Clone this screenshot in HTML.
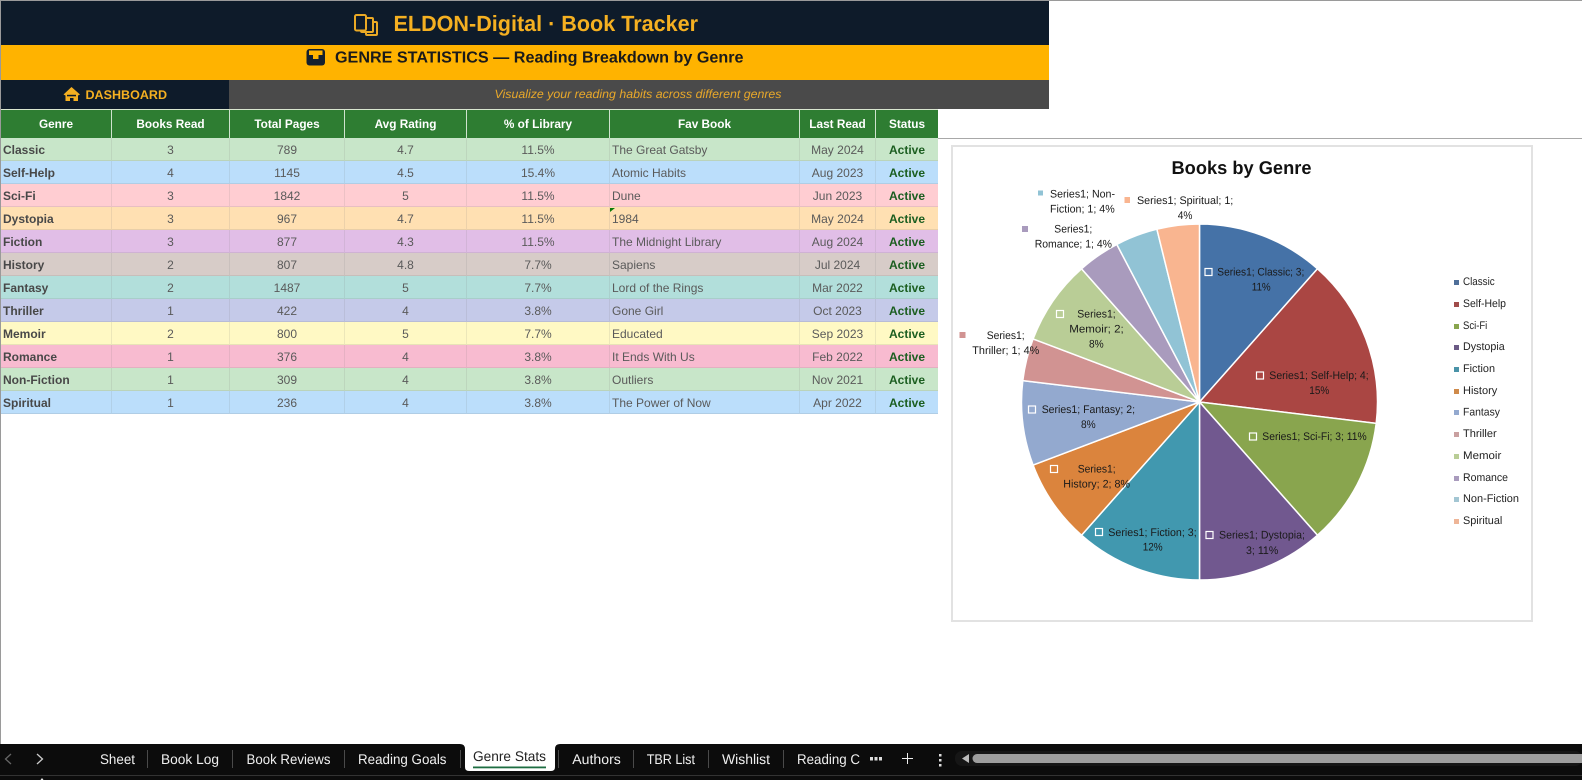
<!DOCTYPE html>
<html>
<head>
<meta charset="utf-8">
<title>Book Tracker</title>
<style>
html,body{margin:0;padding:0;background:#fff;}
body{position:relative;width:1582px;height:780px;overflow:hidden;font-family:"Liberation Sans",Arial,sans-serif;}
.b{position:absolute;}
table{position:absolute;left:1px;top:109px;border-collapse:separate;border-spacing:0;table-layout:fixed;width:937px;font-size:12px;color:#5a5a5a;}
th{height:29px;box-sizing:border-box;background:#2e7d32;color:#fff;font-weight:bold;text-align:center;padding:0;border-right:1px solid #cfe3cf;border-top:1px solid #d9e6cf;font-size:11.8px;}
th:last-child{border-right:0;}
td{height:23px;box-sizing:border-box;padding:2px 0 0;text-align:center;border-right:1px solid rgba(120,120,120,.14);border-bottom:1px solid rgba(120,120,120,.16);white-space:nowrap;overflow:hidden;}
td:first-child{text-align:left;padding-left:2px;font-weight:bold;color:#484848;}
td:nth-child(6){text-align:left;padding-left:2px;}
td:last-child{font-weight:bold;color:#1b5e20;border-right:0;}
svg{position:absolute;left:0;top:0;text-rendering:geometricPrecision;}
</style>
</head>
<body>
<div class="b" style="left:0;top:0;width:1582px;height:1px;background:#9a9a9a"></div>
<div class="b" style="left:0;top:0;width:1px;height:744px;background:#9a9a9a"></div>
<div class="b" style="left:1px;top:1px;width:1048px;height:44px;background:#0e1b2a"></div>
<div class="b" style="left:1px;top:45px;width:1048px;height:35px;background:#ffb300"></div>
<div class="b" style="left:1px;top:80px;width:228px;height:29px;background:#0e1b2a"></div>
<div class="b" style="left:229px;top:80px;width:820px;height:29px;background:#4a4a4a"></div>
<div class="b" style="left:938px;top:138px;width:644px;height:1px;background:#a8a8a8"></div>
<div class="b" style="left:951px;top:145px;width:578px;height:473px;border:2px solid #e2e2e2;background:#fff"></div>

<table>
<colgroup><col style="width:111px"><col style="width:118px"><col style="width:115px"><col style="width:122px"><col style="width:143px"><col style="width:190px"><col style="width:76px"><col style="width:62px"></colgroup>
<tr><th>Genre</th><th>Books Read</th><th>Total Pages</th><th>Avg Rating</th><th>% of Library</th><th>Fav Book</th><th>Last Read</th><th>Status</th></tr>
<tr style="background:#c8e6c9"><td>Classic</td><td>3</td><td>789</td><td>4.7</td><td>11.5%</td><td>The Great Gatsby</td><td>May 2024</td><td>Active</td></tr>
<tr style="background:#bbdefb"><td>Self-Help</td><td>4</td><td>1145</td><td>4.5</td><td>15.4%</td><td>Atomic Habits</td><td>Aug 2023</td><td>Active</td></tr>
<tr style="background:#ffcdd2"><td>Sci-Fi</td><td>3</td><td>1842</td><td>5</td><td>11.5%</td><td>Dune</td><td>Jun 2023</td><td>Active</td></tr>
<tr style="background:#ffe0b2"><td>Dystopia</td><td>3</td><td>967</td><td>4.7</td><td>11.5%</td><td>1984</td><td>May 2024</td><td>Active</td></tr>
<tr style="background:#e1bee7"><td>Fiction</td><td>3</td><td>877</td><td>4.3</td><td>11.5%</td><td>The Midnight Library</td><td>Aug 2024</td><td>Active</td></tr>
<tr style="background:#d7ccc8"><td>History</td><td>2</td><td>807</td><td>4.8</td><td>7.7%</td><td>Sapiens</td><td>Jul 2024</td><td>Active</td></tr>
<tr style="background:#b2dfdb"><td>Fantasy</td><td>2</td><td>1487</td><td>5</td><td>7.7%</td><td>Lord of the Rings</td><td>Mar 2022</td><td>Active</td></tr>
<tr style="background:#c5cae9"><td>Thriller</td><td>1</td><td>422</td><td>4</td><td>3.8%</td><td>Gone Girl</td><td>Oct 2023</td><td>Active</td></tr>
<tr style="background:#fff9c4"><td>Memoir</td><td>2</td><td>800</td><td>5</td><td>7.7%</td><td>Educated</td><td>Sep 2023</td><td>Active</td></tr>
<tr style="background:#f8bbd0"><td>Romance</td><td>1</td><td>376</td><td>4</td><td>3.8%</td><td>It Ends With Us</td><td>Feb 2022</td><td>Active</td></tr>
<tr style="background:#c8e6c9"><td>Non-Fiction</td><td>1</td><td>309</td><td>4</td><td>3.8%</td><td>Outliers</td><td>Nov 2021</td><td>Active</td></tr>
<tr style="background:#bbdefb"><td>Spiritual</td><td>1</td><td>236</td><td>4</td><td>3.8%</td><td>The Power of Now</td><td>Apr 2022</td><td>Active</td></tr>
</table>

<svg width="1582" height="780" viewBox="0 0 1582 780" xmlns="http://www.w3.org/2000/svg" font-family="'Liberation Sans',Arial,sans-serif">
<!-- header icons -->
<g fill="#0e1b2a" stroke="#eaa925" stroke-width="2" stroke-linejoin="round">
<rect x="366" y="22" width="11" height="13" rx="1"/>
<rect x="361" y="18" width="12" height="14" rx="1"/>
<rect x="355" y="15" width="11" height="15.500" rx="1.500"/>
</g>
<rect x="306.500" y="49" width="18.500" height="16.500" rx="3" fill="#14202e"/>
<path d="M309 50.500h13.500v4.500h-4v4h-5.500v-4h-4z" fill="#ffb300"/>
<path d="M63.500 94.500L71.500 87L80 94.500L78 95.500V101H65.500V95.500Z" fill="#f5b021"/>
<rect x="67" y="94.800" width="9" height="1.500" fill="#0e1b2a"/>
<rect x="70" y="98" width="3.500" height="3" fill="#0e1b2a"/>
<polygon points="610,208 615,208 610,212" fill="#0a7a0a"/>

<!-- header text -->
<text x="393.500" y="31" font-size="22" font-weight="bold" fill="#f5b021" textLength="304.500" lengthAdjust="spacingAndGlyphs">ELDON-Digital · Book Tracker</text>
<text x="335" y="62.500" font-size="16" font-weight="bold" fill="#1a1a1a" textLength="408.500" lengthAdjust="spacingAndGlyphs">GENRE STATISTICS — Reading Breakdown by Genre</text>
<text x="85.500" y="99" font-size="12.500" font-weight="bold" fill="#f5b021" textLength="81.500" lengthAdjust="spacingAndGlyphs">DASHBOARD</text>
<text x="494.500" y="98" font-size="12" font-style="italic" fill="#e8a82a" textLength="287" lengthAdjust="spacingAndGlyphs">Visualize your reading habits across different genres</text>

<!-- chart title -->
<text x="1171.500" y="174" font-size="18.500" font-weight="bold" fill="#111" textLength="140" lengthAdjust="spacingAndGlyphs">Books by Genre</text>

<!-- pie -->
<g stroke="#fff" stroke-width="1.500" stroke-linejoin="round">
<path d="M1199.500 402V224A178 178 0 0 1 1317.500 268.800Z" fill="#4572a7"/>
<path d="M1199.500 402L1317.500 268.800A178 178 0 0 1 1376.200 423.400Z" fill="#aa4643"/>
<path d="M1199.500 402L1376.200 423.400A178 178 0 0 1 1317.500 535.200Z" fill="#89a54e"/>
<path d="M1199.500 402L1317.500 535.200A178 178 0 0 1 1199.500 580Z" fill="#71588f"/>
<path d="M1199.500 402V580A178 178 0 0 1 1081.500 535.200Z" fill="#4198af"/>
<path d="M1199.500 402L1081.500 535.200A178 178 0 0 1 1033.100 465.100Z" fill="#db843d"/>
<path d="M1199.500 402L1033.100 465.100A178 178 0 0 1 1022.800 380.600Z" fill="#93a9cf"/>
<path d="M1199.500 402L1022.800 380.600A178 178 0 0 1 1033.100 338.900Z" fill="#d19392"/>
<path d="M1199.500 402L1033.100 338.900A178 178 0 0 1 1081.500 268.800Z" fill="#b9cd96"/>
<path d="M1199.500 402L1081.500 268.800A178 178 0 0 1 1116.800 244.400Z" fill="#a99bbd"/>
<path d="M1199.500 402L1116.800 244.400A178 178 0 0 1 1156.900 229.200Z" fill="#91c3d5"/>
<path d="M1199.500 402L1156.900 229.200A178 178 0 0 1 1199.500 224Z" fill="#f9b590"/>
</g>

<!-- label markers -->
<g fill="none" stroke="#fff" stroke-width="1.200">
<rect x="1205" y="268.500" width="7" height="7"/>
<rect x="1256.500" y="372" width="7" height="7"/>
<rect x="1249.500" y="433" width="7" height="7"/>
<rect x="1206" y="531.500" width="7" height="7"/>
<rect x="1095.500" y="528.500" width="7" height="7"/>
<rect x="1050.500" y="465.500" width="7" height="7"/>
<rect x="1028.500" y="406" width="7" height="7"/>
<rect x="1056.500" y="310.500" width="7" height="7"/>
</g>
<rect x="959.500" y="332" width="6" height="6" fill="#d19392"/>
<rect x="1022" y="226" width="6" height="6" fill="#a99bbd"/>
<rect x="1038" y="190.500" width="5" height="5" fill="#91c3d5"/>
<rect x="1124.500" y="197" width="5.500" height="6" fill="#f9b590"/>

<!-- data labels -->
<g font-size="11" fill="#1a1a1a">
<text x="1217.300" y="275.700" textLength="87" lengthAdjust="spacingAndGlyphs">Series1; Classic; 3;</text>
<text x="1251.700" y="290.700" textLength="19" lengthAdjust="spacingAndGlyphs">11%</text>
<text x="1269.300" y="379" textLength="99.400" lengthAdjust="spacingAndGlyphs">Series1; Self-Help; 4;</text>
<text x="1309.300" y="394" textLength="20" lengthAdjust="spacingAndGlyphs">15%</text>
<text x="1262.300" y="440" textLength="104.400" lengthAdjust="spacingAndGlyphs">Series1; Sci-Fi; 3; 11%</text>
<text x="1219" y="538.700" textLength="86" lengthAdjust="spacingAndGlyphs">Series1; Dystopia;</text>
<text x="1246" y="554" textLength="32.300" lengthAdjust="spacingAndGlyphs">3; 11%</text>
<text x="1108.300" y="536" textLength="88.400" lengthAdjust="spacingAndGlyphs">Series1; Fiction; 3;</text>
<text x="1142.700" y="550.700" textLength="20" lengthAdjust="spacingAndGlyphs">12%</text>
<text x="1077.700" y="472.700" textLength="38" lengthAdjust="spacingAndGlyphs">Series1;</text>
<text x="1063.300" y="487.700" textLength="66.700" lengthAdjust="spacingAndGlyphs">History; 2; 8%</text>
<text x="1041.700" y="413" textLength="93.300" lengthAdjust="spacingAndGlyphs">Series1; Fantasy; 2;</text>
<text x="1081" y="428" textLength="14.700" lengthAdjust="spacingAndGlyphs">8%</text>
<text x="986.700" y="339" textLength="38" lengthAdjust="spacingAndGlyphs">Series1;</text>
<text x="972.300" y="354" textLength="67" lengthAdjust="spacingAndGlyphs">Thriller; 1; 4%</text>
<text x="1077.300" y="317.700" textLength="38.400" lengthAdjust="spacingAndGlyphs">Series1;</text>
<text x="1069.300" y="332.700" textLength="54.400" lengthAdjust="spacingAndGlyphs">Memoir; 2;</text>
<text x="1089" y="347.700" textLength="14.700" lengthAdjust="spacingAndGlyphs">8%</text>
<text x="1054.300" y="232.700" textLength="38" lengthAdjust="spacingAndGlyphs">Series1;</text>
<text x="1034.700" y="247.700" textLength="77.300" lengthAdjust="spacingAndGlyphs">Romance; 1; 4%</text>
<text x="1050" y="197.300" textLength="65" lengthAdjust="spacingAndGlyphs">Series1; Non-</text>
<text x="1050" y="212.300" textLength="64.700" lengthAdjust="spacingAndGlyphs">Fiction; 1; 4%</text>
<text x="1137" y="204" textLength="96.300" lengthAdjust="spacingAndGlyphs">Series1; Spiritual; 1;</text>
<text x="1177.700" y="219" textLength="14.700" lengthAdjust="spacingAndGlyphs">4%</text>
</g>

<!-- legend -->
<g>
<rect x="1454" y="280" width="5" height="5" fill="#4f6f99"/>
<rect x="1454" y="302" width="5" height="5" fill="#a04c4a"/>
<rect x="1454" y="324" width="5" height="5" fill="#89a54e"/>
<rect x="1454" y="345" width="5" height="5" fill="#6b5a85"/>
<rect x="1454" y="367" width="5" height="5" fill="#4a93a8"/>
<rect x="1454" y="389" width="5" height="5" fill="#cf8a4a"/>
<rect x="1454" y="410" width="5" height="5" fill="#93a9cf"/>
<rect x="1454" y="432" width="5" height="5" fill="#c9a0a0"/>
<rect x="1454" y="454" width="5" height="5" fill="#b9cd96"/>
<rect x="1454" y="476" width="5" height="5" fill="#a99bbd"/>
<rect x="1454" y="497" width="5" height="5" fill="#a3c6d3"/>
<rect x="1454" y="519" width="5" height="5" fill="#eeb597"/>
</g>
<g font-size="11" fill="#222">
<text x="1463" y="285" textLength="31.700" lengthAdjust="spacingAndGlyphs">Classic</text>
<text x="1463" y="307" textLength="43" lengthAdjust="spacingAndGlyphs">Self-Help</text>
<text x="1463" y="329" textLength="24.300" lengthAdjust="spacingAndGlyphs">Sci-Fi</text>
<text x="1463" y="350" textLength="41.700" lengthAdjust="spacingAndGlyphs">Dystopia</text>
<text x="1463" y="372" textLength="32" lengthAdjust="spacingAndGlyphs">Fiction</text>
<text x="1463" y="394" textLength="34.300" lengthAdjust="spacingAndGlyphs">History</text>
<text x="1463" y="415.700" textLength="37" lengthAdjust="spacingAndGlyphs">Fantasy</text>
<text x="1463" y="437" textLength="33.700" lengthAdjust="spacingAndGlyphs">Thriller</text>
<text x="1463" y="459" textLength="38.300" lengthAdjust="spacingAndGlyphs">Memoir</text>
<text x="1463" y="481" textLength="45" lengthAdjust="spacingAndGlyphs">Romance</text>
<text x="1463" y="502" textLength="56" lengthAdjust="spacingAndGlyphs">Non-Fiction</text>
<text x="1463" y="524" textLength="39.300" lengthAdjust="spacingAndGlyphs">Spiritual</text>
</g>

<!-- bottom bar -->
<rect x="0" y="744" width="1582" height="36" fill="#0c0c0c"/>
<rect x="0" y="775" width="1582" height="1" fill="#333"/>
<polygon points="40.500,780 42,778 43.500,780" fill="#eee"/>
<path d="M11 754L5.500 759L11 764" fill="none" stroke="#666" stroke-width="1.300"/>
<path d="M37 754L42.500 759L37 764" fill="none" stroke="#ccc" stroke-width="1.300"/>
<path d="M460 744Q465 744 465 749V767Q465 771 469 771H551Q555 771 555 767V749Q555 744 560 744Z" fill="#fff"/>
<rect x="473" y="766.500" width="73" height="1.800" fill="#1e6e42"/>
<g fill="#f0f0f0" font-size="14">
<text x="100" y="764" textLength="35" lengthAdjust="spacingAndGlyphs">Sheet</text>
<text x="161" y="764" textLength="58" lengthAdjust="spacingAndGlyphs">Book Log</text>
<text x="246.500" y="764" textLength="84" lengthAdjust="spacingAndGlyphs">Book Reviews</text>
<text x="358" y="764" textLength="88.500" lengthAdjust="spacingAndGlyphs">Reading Goals</text>
<text x="473" y="761" textLength="73" lengthAdjust="spacingAndGlyphs" fill="#222">Genre Stats</text>
<text x="572.300" y="764" textLength="48.500" lengthAdjust="spacingAndGlyphs">Authors</text>
<text x="646.700" y="764" textLength="48.300" lengthAdjust="spacingAndGlyphs">TBR List</text>
<text x="722" y="764" textLength="48" lengthAdjust="spacingAndGlyphs">Wishlist</text>
<text x="797" y="764" textLength="63" lengthAdjust="spacingAndGlyphs">Reading C</text>
</g>
<g fill="#4a4a4a">
<rect x="147" y="750" width="1" height="18"/>
<rect x="232" y="750" width="1" height="18"/>
<rect x="344" y="750" width="1" height="18"/>
<rect x="460" y="750" width="1" height="18"/>
<rect x="558" y="750" width="1" height="18"/>
<rect x="633" y="750" width="1" height="18"/>
<rect x="708" y="750" width="1" height="18"/>
<rect x="783" y="750" width="1" height="18"/>
</g>
<g fill="#ddd">
<rect x="870" y="757" width="3" height="3.500"/>
<rect x="874.500" y="757" width="3" height="3.500"/>
<rect x="879" y="757" width="3" height="3.500"/>
<rect x="939" y="754" width="2.500" height="2.500"/>
<rect x="939" y="759" width="2.500" height="2.500"/>
<rect x="939" y="764" width="2.500" height="2.500"/>
</g>
<path d="M902 758.500H913M907.500 753V764" stroke="#eee" stroke-width="1"/>
<rect x="955" y="751" width="627" height="15" rx="7" fill="#161616"/>
<polygon points="969,754 962,758.500 969,763" fill="#bbb"/>
<path d="M977 754H1582V763H977A4.500 4.500 0 0 1 977 754Z" fill="#9e9e9e"/>
</svg>
</body>
</html>
